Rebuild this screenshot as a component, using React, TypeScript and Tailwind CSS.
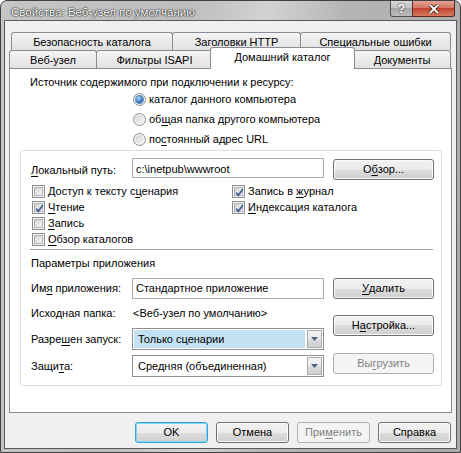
import React from 'react';

const U = ({ children }: { children: React.ReactNode }) => (
  <span className="underline decoration-1 underline-offset-[2px]">{children}</span>
);

const Check = ({ checked }: { checked?: boolean }) => (
  <span className="relative flex h-[13px] w-[13px] shrink-0 items-center justify-center border border-[#8e8f8f] bg-[#f4f4f4]">
    <span className="h-[9px] w-[9px] border border-[#b0b5bb] bg-[linear-gradient(135deg,#cfd2d6,#f7f7f7)]" />
    {checked && (
      <svg className="absolute left-[1px] top-[1px]" width="11" height="11" viewBox="0 0 11 11">
        <path d="M2.2 5.6 L4.4 8.2 L8.8 2.2" stroke="#4a5f97" strokeWidth="1.8" fill="none" />
      </svg>
    )}
  </span>
);

const Radio = ({ checked }: { checked?: boolean }) => (
  <span className="flex h-[13px] w-[13px] shrink-0 items-center justify-center rounded-full border border-[#8e8f8f] bg-[#f4f4f4]">
    {checked ? (
      <span className="h-[7px] w-[7px] rounded-full bg-[radial-gradient(circle_at_40%_35%,#a9dcf9,#1d5fae_70%)] shadow-[0_0_0_1px_#5a86b8]" />
    ) : (
      <span className="h-[9px] w-[9px] rounded-full bg-[linear-gradient(135deg,#cfd2d6,#f7f7f7)]" />
    )}
  </span>
);

const Btn = ({
  children,
  w,
  disabled,
  focused,
}: {
  children: React.ReactNode;
  w: string;
  disabled?: boolean;
  focused?: boolean;
}) => (
  <div
    className={`flex h-[21px] shrink-0 items-center justify-center rounded-[3px] border text-[11px] leading-[13px] ${w} ${
      disabled
        ? 'border-[#adb2b5] bg-[#f4f4f4] text-[#838383]'
        : focused
        ? 'border-[#3c9fd6] bg-[linear-gradient(to_bottom,#f2f2f2_0%,#ebebeb_50%,#dddddd_50%,#cfcfcf_100%)] text-black shadow-[inset_0_0_0_1px_#7fd8f7]'
        : 'border-[#707070] bg-[linear-gradient(to_bottom,#f2f2f2_0%,#ebebeb_50%,#dddddd_50%,#cfcfcf_100%)] text-black shadow-[inset_0_0_0_1px_#fbfbfb]'
    }`}
  >
    {children}
  </div>
);

const Combo = ({ children, selected }: { children: React.ReactNode; selected?: boolean }) => (
  <div className="flex h-[22px] w-[192px] items-stretch border border-[#8e8f8f] bg-white p-[1px]">
    <div className={`flex flex-1 items-center pl-[4px] ${selected ? 'bg-[#c4e1f4]' : ''}`}>{children}</div>
    <div className="ml-[2px] flex w-[15px] items-center justify-center border border-[#a7abb0] bg-[linear-gradient(to_bottom,#f3f3f3_0%,#ebebeb_50%,#dddddd_50%,#cfcfcf_100%)]">
      <svg width="7" height="4" viewBox="0 0 7 4">
        <path d="M0 0 H7 L3.5 4 Z" fill="#4d6185" />
      </svg>
    </div>
  </div>
);

const tabBase =
  'flex h-[18px] shrink-0 items-start justify-center rounded-t-[3px] border border-b-0 border-[#898c95] bg-[linear-gradient(to_bottom,#f4f4f4,#e1e1e1)] pt-[3px] text-[11px] leading-[13px]';

export default function App() {
  return (
    <div className="flex h-[453px] w-[461px] flex-col overflow-hidden rounded-t-[7px] border border-[#404040] bg-[linear-gradient(100deg,#c6c6c6_0%,#bdbdbd_35%,#d2d2d2_50%,#b4b4b4_65%,#aaaaaa_100%)] font-['Liberation_Sans',Arial,sans-serif] text-black">
      {/* title bar */}
      <div className="flex h-[19px] shrink-0 items-start">
        <div className="pl-[10px] pt-[5px] text-[11.5px] leading-[13px] text-white [text-shadow:0_0_2px_#000,0_0_1px_#000]">
          Свойства: Веб-узел по умолчанию
        </div>
        <div className="ml-auto mr-[5px] flex">
          <div className="flex h-[16px] w-[23px] items-center justify-center rounded-bl-[3px] border border-t-0 border-[#505050] bg-[linear-gradient(to_bottom,#d8d8d8_0%,#c0c0c0_50%,#a8a8a8_50%,#bdbdbd_100%)] text-[12px] font-bold leading-none text-white [text-shadow:0_0_2px_#000]">
            ?
          </div>
          <div className="-ml-px flex h-[16px] w-[43px] items-center justify-center rounded-br-[3px] border border-t-0 border-[#5a2a22] bg-[linear-gradient(to_bottom,#e3a595_0%,#d2705d_50%,#c2432f_50%,#d67a63_100%)]">
            <svg width="12" height="10" viewBox="0 0 12 10">
              <path d="M2 1 L10 9 M10 1 L2 9" stroke="#3a1a14" strokeWidth="3.4" />
              <path d="M2 1 L10 9 M10 1 L2 9" stroke="#ffffff" strokeWidth="1.8" />
            </svg>
          </div>
        </div>
      </div>

      {/* client */}
      <div className="mx-[3px] mb-[3px] flex flex-1 flex-col border border-[#5a5a5a] bg-[#f0f0f0] px-[4px] pt-[11px]">
        {/* tabs row 1 */}
        <div className="ml-[2px] flex h-[18px]">
          <div className={`${tabBase} w-[162px]`}>Безопасность каталога</div>
          <div className={`${tabBase} -ml-px w-[129px]`}>Заголовки HTTP</div>
          <div className={`${tabBase} -ml-px w-[151px]`}>Специальные ошибки</div>
        </div>
        {/* tabs row 2 */}
        <div className="flex h-[18px] items-start">
          <div className={`${tabBase} w-[88px]`}>Веб-узел</div>
          <div className={`${tabBase} -ml-px w-[117px]`}>Фильтры ISAPI</div>
          <div className="relative z-10 -ml-[3px] -mt-[3px] flex h-[22px] w-[145px] shrink-0 items-start justify-center rounded-t-[3px] border border-b-0 border-[#898c95] bg-white pt-[3px] text-[11px] leading-[13px]">
            Домашний каталог
          </div>
          <div className={`${tabBase} -ml-[2px] w-[98px]`}>Документы</div>
        </div>

        {/* panel */}
        <div className="flex h-[345px] flex-col border border-[#898c95] bg-white text-[11px] leading-[13px]">
          <div className="ml-[20px] mt-[7px] h-[13px]">Источник содержимого при подключении к ресурсу:</div>
          <div className="ml-[123px] flex flex-col">
            <div className="flex h-[20px] items-center gap-[3px]">
              <Radio checked />
              <span>
                каталог <U>д</U>анного компьютера
              </span>
            </div>
            <div className="flex h-[20px] items-center gap-[3px]">
              <Radio />
              <span>
                об<U>щ</U>ая папка другого компьютера
              </span>
            </div>
            <div className="flex h-[20px] items-center gap-[3px]">
              <Radio />
              <span>
                по<U>с</U>тоянный адрес URL
              </span>
            </div>
          </div>

          {/* group box */}
          <div className="ml-[10px] mt-[1px] flex h-[236px] w-[422px] flex-col rounded-[3px] border border-[#d5dfe5]">
            <div className="mt-[7px] flex h-[21px] items-start pl-[10px]">
              <div className="w-[101px] pt-[6px]">
                <U>Л</U>окальный путь:
              </div>
              <div className="flex h-[20px] w-[192px] items-center border border-[#abadb3] pl-[3px] pt-[2px]">
                c:\inetpub\wwwroot
              </div>
              <div className="ml-[9px] mt-[1px]">
                <Btn w="w-[101px]">
                  О<U>б</U>зор...
                </Btn>
              </div>
            </div>

            <div className="mt-[4px] flex pl-[11px]">
              <div className="flex w-[200px] flex-col">
                <div className="flex h-[16px] items-center gap-[3px]">
                  <Check />
                  <span>
                    Доступ к тексту с<U>ц</U>енария
                  </span>
                </div>
                <div className="flex h-[16px] items-center gap-[3px]">
                  <Check checked />
                  <span>
                    <U>Ч</U>тение
                  </span>
                </div>
                <div className="flex h-[16px] items-center gap-[3px]">
                  <Check />
                  <span>
                    <U>З</U>апись
                  </span>
                </div>
                <div className="flex h-[16px] items-center gap-[3px]">
                  <Check />
                  <span>
                    <U>О</U>бзор каталогов
                  </span>
                </div>
              </div>
              <div className="flex flex-col">
                <div className="flex h-[16px] items-center gap-[3px]">
                  <Check checked />
                  <span>
                    Запись в <U>ж</U>урнал
                  </span>
                </div>
                <div className="flex h-[16px] items-center gap-[3px]">
                  <Check checked />
                  <span>
                    <U>И</U>ндексация каталога
                  </span>
                </div>
              </div>
            </div>

            <div className="ml-[9px] mt-[2px] h-px w-[403px] bg-[#a0a0a0]" />

            <div className="ml-[10px] mt-[7px] h-[13px]">Параметры приложения</div>

            <div className="mt-[8px] flex pl-[10px]">
              <div className="flex flex-col">
                <div className="flex h-[21px] items-start">
                  <div className="w-[101px] pt-[4px]">
                    Им<U>я</U> приложения:
                  </div>
                  <div className="flex h-[21px] w-[192px] items-center border border-[#abadb3] pl-[3px]">
                    Стандартное приложение
                  </div>
                </div>
                <div className="mt-[8px] flex h-[13px]">
                  <div className="w-[102px]">Исходная папка:</div>
                  <div>&lt;Веб-узел по умолчанию&gt;</div>
                </div>
                <div className="mt-[8px] flex h-[22px] items-start">
                  <div className="w-[101px] pt-[5px]">
                    Разре<U>ш</U>ен запуск:
                  </div>
                  <Combo selected>Только сценарии</Combo>
                </div>
                <div className="mt-[5px] flex h-[22px] items-start">
                  <div className="w-[101px] pt-[5px]">
                    Защи<U>т</U>а:
                  </div>
                  <Combo>Средняя (объединенная)</Combo>
                </div>
              </div>
              <div className="ml-[9px] flex flex-col">
                <Btn w="w-[101px]">
                  <U>У</U>далить
                </Btn>
                <div className="mt-[16px]">
                  <Btn w="w-[101px]">
                    Н<U>а</U>стройка...
                  </Btn>
                </div>
                <div className="mt-[17px]">
                  <Btn w="w-[101px]" disabled>
                    Вы<U>г</U>рузить
                  </Btn>
                </div>
              </div>
            </div>
          </div>
        </div>

        {/* dialog buttons */}
        <div className="mt-[9px] flex justify-end gap-[8px] pr-px">
          <Btn w="w-[73px]" focused>
            OK
          </Btn>
          <Btn w="w-[73px]">Отмена</Btn>
          <Btn w="w-[73px]" disabled>
            При<U>м</U>енить
          </Btn>
          <Btn w="w-[73px]">Справка</Btn>
        </div>
      </div>
    </div>
  );
}
